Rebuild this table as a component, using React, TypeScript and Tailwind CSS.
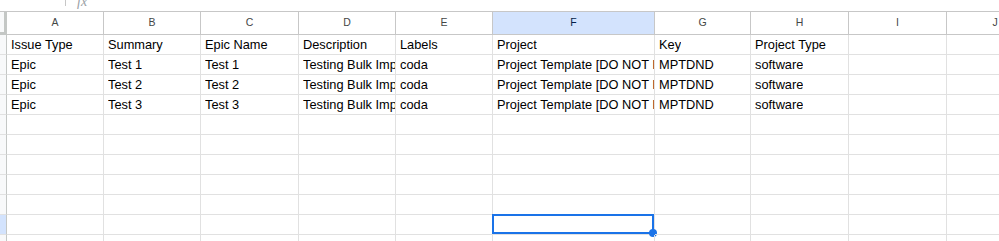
const columns = [
  { letter: "A", width: 97 },
  { letter: "B", width: 97 },
  { letter: "C", width: 98 },
  { letter: "D", width: 97 },
  { letter: "E", width: 97 },
  { letter: "F", width: 162 },
  { letter: "G", width: 96 },
  { letter: "H", width: 98 },
  { letter: "I", width: 98 },
  { letter: "J", width: 97 },
];

const rows: string[][] = [
  ["Issue Type", "Summary", "Epic Name", "Description", "Labels", "Project", "Key", "Project Type"],
  ["Epic", "Test 1", "Test 1", "Testing Bulk Import", "coda", "Project Template [DO NOT IMPORT]", "MPTDND", "software"],
  ["Epic", "Test 2", "Test 2", "Testing Bulk Import", "coda", "Project Template [DO NOT IMPORT]", "MPTDND", "software"],
  ["Epic", "Test 3", "Test 3", "Testing Bulk Import", "coda", "Project Template [DO NOT IMPORT]", "MPTDND", "software"],
];

const TOTAL_ROWS = 11;
const ACTIVE_ROW = 9;
const ACTIVE_COL = 5;

const App = () => {
  return (
    <div
      className="w-[999px] h-[241px] overflow-hidden bg-white text-black"
      style={{ fontFamily: '"Liberation Sans", Arial, sans-serif' }}
    >
      {/* formula bar, scrolled mostly out of view */}
      <div className="flex h-[11px] overflow-hidden">
        <div className="ml-[65px] w-px h-[6px] bg-[#c7c7c7]" />
        <span
          className="ml-[11px] -mt-[9px] text-[14px] italic text-[#9aa0a6]"
          style={{ fontFamily: '"Liberation Serif", serif' }}
        >
          fx
        </span>
      </div>

      <div className="flex flex-col border-t border-[#c7c7c7]">
        {/* column letters */}
        <div className="flex h-[23px]">
          <div className="w-[7px] shrink-0 bg-[#f8f9fa] border-r-[3px] border-b-[3px] border-[#c4c7c5]" />
          {columns.map((col, i) => (
            <div
              key={col.letter}
              style={{ width: col.width }}
              className={
                "shrink-0 flex items-center justify-center border-r border-b border-[#c7c7c7] text-[10.5px] " +
                (i === ACTIVE_COL
                  ? "bg-[#d3e3fd] text-[#041e49] font-medium"
                  : "bg-white text-[#444746]")
              }
            >
              {col.letter}
            </div>
          ))}
        </div>

        {/* grid body */}
        {Array.from({ length: TOTAL_ROWS }).map((_, r) => (
          <div key={r} className="flex h-[20px]">
            <div
              className={
                "w-[7px] shrink-0 border-r border-b border-r-[#c4c7c5] border-b-[#e1e1e1] " +
                (r === ACTIVE_ROW ? "bg-[#d3e3fd]" : "bg-[#f8f9fa]")
              }
            />
            {columns.map((col, c) => (
              <div
                key={col.letter}
                style={{ width: col.width }}
                className="relative shrink-0 flex items-end border-r border-b border-[#e1e1e1] pl-[4px] pb-[1px]"
              >
                <span className="min-w-0 overflow-hidden whitespace-nowrap text-[12.8px] leading-[16px] text-[#000]">
                  {rows[r]?.[c] ?? ""}
                </span>
                {r === ACTIVE_ROW && c === ACTIVE_COL && (
                  <div className="absolute -left-px -top-px right-0 bottom-0 border-2 border-[#1a73e8]">
                    <div className="absolute -right-[5px] -bottom-[5px] w-[8px] h-[8px] rounded-full bg-[#1a73e8]" />
                  </div>
                )}
              </div>
            ))}
          </div>
        ))}
      </div>
    </div>
  );
};

export default App;
